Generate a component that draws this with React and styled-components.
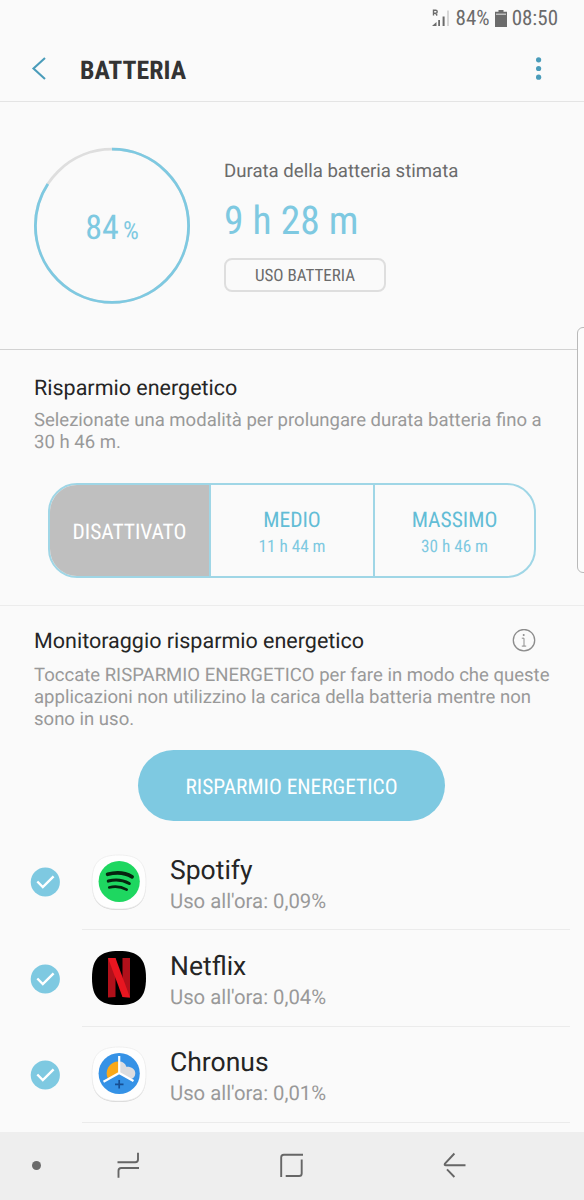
import styled, { createGlobalStyle, css } from 'styled-components';

const colors = {
    page: '#fafafa',
    blue: '#7ec9e1',
    blueText: '#62bdd6',
    accent: '#4a9cba',
    title: '#333333',
    black: '#252525',
    dark: '#6b6b6b',
    grey: '#999999',
    line: '#e4e4e4',
};

const apps = [
    { name: 'Spotify', usage: "Uso all'ora: 0,09%", icon: 'spotify' },
    { name: 'Netflix', usage: "Uso all'ora: 0,04%", icon: 'netflix' },
    { name: 'Chronus', usage: "Uso all'ora: 0,01%", icon: 'chronus' },
];

const Signal = () => (
    <svg width="19" height="18" viewBox="0 0 19 18">
        <path d="M1.500 6.500V1.200h2.200a1.500 1.500 0 0 1 0 3H1.500M3.500 4.200L5.200 6.500" fill="none" stroke="#6b6b6b" strokeWidth="1.400" />
        <path d="M0 17l4.500-4v4zM6.200 11H8v6H6.200zM10.600 7.500h2V17h-2z" fill="#6b6b6b" />
        <path d="M15.200 1.500h1.600V17h-1.600z" fill="#cfcfcf" />
    </svg>
);

const BatteryIcon = () => (
    <svg width="12" height="17" viewBox="0 0 12 17">
        <path d="M3.500 0h5v1.800H12V17H0V1.800h3.500z" fill="#6b6b6b" />
        <path d="M1 3.600h10v1.200H1z" fill="#d5d5d5" />
    </svg>
);

const BackIcon = () => (
    <svg width="16" height="24" viewBox="0 0 16 24">
        <path d="M14 1L2.500 11.500L14 22" fill="none" stroke={colors.accent} strokeWidth="2.100" />
    </svg>
);

const MoreIcon = () => (
    <svg width="8" height="24" viewBox="0 0 8 24">
        <circle cx="3.600" cy="2.800" r="2.600" fill={colors.accent} />
        <circle cx="3.600" cy="11.500" r="2.600" fill={colors.accent} />
        <circle cx="3.600" cy="20.200" r="2.600" fill={colors.accent} />
    </svg>
);

const InfoIcon = () => (
    <svg width="24" height="24" viewBox="0 0 24 24">
        <circle cx="12" cy="11.200" r="10.700" fill="none" stroke="#8c8c8c" strokeWidth="1.300" />
        <path d="M9.800 9.200h2.200v8M9.800 17.100h4.400" fill="none" stroke="#8c8c8c" strokeWidth="1" />
        <circle cx="11.700" cy="6" r="1" fill="#8c8c8c" />
    </svg>
);

const Ring = () => (
    <svg width="158" height="158" viewBox="0 0 158 158">
        <g fill="none" strokeWidth="2.800" transform="rotate(-90 79 79)">
            <circle cx="79.200" cy="79" r="76.600" stroke="#dedede" />
            <circle cx="79.200" cy="79" r="76.600" stroke={colors.blue} pathLength="100" strokeDasharray="84.200 15.800" />
        </g>
    </svg>
);

const CheckIcon = () => (
    <svg width="30" height="30" viewBox="0 0 30 30">
        <circle cx="15.300" cy="15" r="14.600" fill={colors.blue} />
        <path d="M7.300 14.500l5.500 5.500L23.600 9.300" fill="none" stroke="#fff" strokeWidth="2.400" />
    </svg>
);

const tile = 'M28 1C47.500 1 55 8.500 55 28S47.500 55 28 55 1 47.500 1 28 8.500 1 28 1z';

const AppIcon = ({ type }) => (
    <svg width="56" height="57" viewBox="0 0 56 57">
        {type !== 'netflix' && (
            <>
                <path d={tile} fill="#d4d4d4" transform="translate(0 .9)" />
                <path d={tile} fill="#fefefe" stroke="#ececec" strokeWidth=".8" />
            </>
        )}
        {type === 'spotify' && (
            <>
                <circle cx="28.200" cy="27.500" r="20.600" fill="#1ed760" />
                <g fill="none" stroke="#06240f" strokeLinecap="round">
                    <path d="M16.600 20.300c8-2.200 17.500-1.700 24.500 2.500" strokeWidth="3.700" />
                    <path d="M17.300 27.100c7.200-2 14.500-1.200 21 2.400" strokeWidth="3.100" />
                    <path d="M18.200 33.400c6.300-1.500 12-.8 17.500 2.300" strokeWidth="2.600" />
                </g>
            </>
        )}
        {type === 'netflix' && (
            <>
                <path d={tile} fill="#000" />
                <path d="M17 8h7.500v39l-7.500.500zM31.500 8H39v39.500l-7.500-.5z" fill="#b1101a" />
                <path d="M17 8h7.500L39 47.500l-7.500-.5z" fill="#e81620" />
            </>
        )}
        {type === 'chronus' && (
            <>
                <circle cx="28.200" cy="27.500" r="20.600" fill="#3592e6" />
                <path d="M28 27L17.300 33.500A12 12 0 0 1 28 15.500z" fill="#fba919" />
                <path d="M28 15.500c4 0 6.500 2 7.300 5.200 4.700-.4 9 2.300 9 6.500 0 3.400-2 5.300-4.500 5.800L28 27.500z" fill="#dcdde0" />
                <path d="M28.200 10V28M28.200 27L12.500 35.800M28.200 27l14.300 8" fill="none" stroke="#fff" strokeWidth="2.200" />
                <path d="M28.200 34v8.500M24 38.300h8.500" stroke="#174f93" strokeWidth="1.700" />
            </>
        )}
    </svg>
);

const RecentsIcon = () => (
    <svg width="24" height="26" viewBox="0 0 24 26">
        <path d="M1.500 10.300h17.800q2.700 0 2.700-2.700V.7M23 16H5.200q-2.700 0-2.700 2.700v7" fill="none" stroke="#666" strokeWidth="1.900" />
    </svg>
);

const HomeIcon = () => (
    <svg width="24" height="26" viewBox="0 0 24 26">
        <path d="M2.200 25V5.300q0-2.600 2.600-2.600H24M22.700 7.500v13.900q0 2.600-2.600 2.600H6.700" fill="none" stroke="#666" strokeWidth="1.900" />
    </svg>
);

const ReturnIcon = () => (
    <svg width="24" height="26" viewBox="0 0 24 26">
        <path d="M12.400 1.500L3 11.600q-1 1.700.8 1.700h19.700M5 17.300l7.400 7.700" fill="none" stroke="#666" strokeWidth="1.900" />
    </svg>
);

export default function App() {
    return (
        <Screen>
            <GlobalStyle />
            <StatusBar>
                <Signal />
                <Narrow $size={21}>84%</Narrow>
                <BatteryIcon />
                <Narrow $size={21}>08:50</Narrow>
            </StatusBar>
            <Header>
                <BackIcon />
                <Title>BATTERIA</Title>
                <MoreIcon />
            </Header>
            <Summary>
                <Gauge>
                    <Ring />
                    <GaugeLabel>84<small>%</small></GaugeLabel>
                </Gauge>
                <Estimate>
                    <EstimateLabel>Durata della batteria stimata</EstimateLabel>
                    <EstimateValue>9 h 28 m</EstimateValue>
                    <UsageButton>USO BATTERIA</UsageButton>
                </Estimate>
            </Summary>
            <Saving>
                <SectionTitle>Risparmio energetico</SectionTitle>
                <SectionText>Selezionate una modalità per prolungare durata batteria fino a<br />30 h 46 m.</SectionText>
                <Modes>
                    <Mode $active>DISATTIVATO</Mode>
                    <Mode>MEDIO<ModeTime>11 h 44 m</ModeTime></Mode>
                    <Mode>MASSIMO<ModeTime>30 h 46 m</ModeTime></Mode>
                </Modes>
            </Saving>
            <Monitor>
                <MonitorHead>
                    <SectionTitle>Monitoraggio risparmio energetico</SectionTitle>
                    <InfoIcon />
                </MonitorHead>
                <SectionText>
                    Toccate RISPARMIO ENERGETICO per fare in modo che queste<br />
                    applicazioni non utilizzino la carica della batteria mentre non<br />
                    sono in uso.
                </SectionText>
                <SaveButton>RISPARMIO ENERGETICO</SaveButton>
            </Monitor>
            <AppList>
                {apps.map((app) => (
                    <AppRow key={app.name}>
                        <CheckIcon />
                        <AppBody>
                            <AppIcon type={app.icon} />
                            <AppInfo>
                                <AppName>{app.name}</AppName>
                                <AppUsage>{app.usage}</AppUsage>
                            </AppInfo>
                        </AppBody>
                    </AppRow>
                ))}
            </AppList>
            <NavBar>
                <Dot />
                <RecentsIcon />
                <HomeIcon />
                <ReturnIcon />
            </NavBar>
            <EdgeHandle />
        </Screen>
    );
}

const GlobalStyle = createGlobalStyle`
    * {
        box-sizing: border-box;
    }

    body {
        margin: 0;
        background: ${colors.page};
        font-family: Roboto, sans-serif;
        text-rendering: geometricPrecision;
    }

    svg {
        display: block;
        flex-shrink: 0;
    }
`

const narrow = css`
    font-family: 'Roboto Condensed', Roboto, sans-serif;
    font-stretch: 75%;
    text-rendering: geometricPrecision;
`

const Screen = styled.div`
    position: relative;
    display: flex;
    flex-direction: column;
    width: 584px;
    height: 1200px;
    overflow: hidden;
    white-space: nowrap;
    background: ${colors.page};
`

const StatusBar = styled.div`
    display: flex;
    align-items: center;
    justify-content: flex-end;
    gap: 5px;
    height: 36px;
    padding-right: 26px;
    color: ${colors.dark};
`

const Narrow = styled.span`
    ${narrow}
    padding-top: 2px;
    font-size: ${({ $size }) => $size}px;
`

const Header = styled.header`
    display: flex;
    align-items: center;
    height: 66px;
    padding: 0 41px 0 31px;
    border-bottom: 1px solid ${colors.line};
`

const Title = styled.h1`
    ${narrow}
    flex-grow: 1;
    margin: 4px 0 0 33px;
    font-size: 25.8px;
    font-weight: 700;
    color: ${colors.title};
`

const Summary = styled.section`
    display: flex;
    height: 248px;
    padding: 45px 33px 0;
    border-bottom: 1px solid #d2d2d2;
`

const Gauge = styled.div`
    display: grid;
    width: 158px;
    height: 158px;

    > * {
        grid-area: 1 / 1;
    }
`

const GaugeLabel = styled.div`
    ${narrow}
    place-self: center;
    padding-top: 4px;
    font-size: 34px;
    color: ${colors.blue};

    small {
        margin-left: 4px;
        font-size: 25px;
    }
`

const Estimate = styled.div`
    margin-left: 33px;
`

const EstimateLabel = styled.div`
    margin-top: 12px;
    font-size: 18.6px;
    line-height: 24px;
    color: ${colors.dark};
`

const EstimateValue = styled.div`
    ${narrow}
    margin-top: 14px;
    font-size: 39.5px;
    line-height: 48px;
    color: ${colors.blue};
`

const UsageButton = styled.button`
    ${narrow}
    display: block;
    width: 162px;
    height: 34px;
    margin-top: 13px;
    padding: 2px 0 0;
    border: 2px solid #dedede;
    border-radius: 8px;
    background: transparent;
    font-size: 17px;
    color: ${colors.dark};
`

const SectionTitle = styled.h2`
    margin: 0;
    font-size: 21.5px;
    font-weight: 400;
    line-height: 26px;
    color: ${colors.black};
`

const SectionText = styled.p`
    margin: 7px 0 0;
    font-size: 18.550px;
    line-height: 22px;
    color: ${colors.grey};
`

const Saving = styled.section`
    height: 256px;
    padding: 26px 34px 0;
    border-bottom: 1px solid #ececec;
`

const Modes = styled.div`
    display: grid;
    grid-template-columns: 159px 164px 161px;
    width: 488px;
    height: 95px;
    margin: 30px 0 0 14px;
    overflow: hidden;
    border: 2px solid #9fd6e6;
    border-radius: 29px;
`

const Mode = styled.div`
    ${narrow}
    display: flex;
    flex-direction: column;
    align-items: center;
    justify-content: center;
    padding-top: ${({ $active }) => $active ? 5 : 6}px;
    border-left: 2px solid #9fd6e6;
    font-size: 21.5px;
    line-height: 26px;
    color: ${({ $active }) => $active ? '#fff' : colors.blueText};
    background: ${({ $active }) => $active ? '#bfbfbf' : 'transparent'};

    &:first-child {
        border-left: 0;
    }
`

const ModeTime = styled.span`
    font-size: 17.2px;
    color: ${colors.blue};
`

const Monitor = styled.section`
    padding: 23px 34px 0;

    ${SectionText} {
        margin-top: 9px;
    }
`

const MonitorHead = styled.div`
    display: flex;
    align-items: center;
    justify-content: space-between;
    padding-right: 14px;

    svg {
        margin-bottom: 2px;
    }
`

const SaveButton = styled.button`
    ${narrow}
    display: block;
    width: 307px;
    height: 71px;
    margin: 20px 0 0 104px;
    padding: 4px 0 0;
    border: 0;
    border-radius: 36px;
    background: ${colors.blue};
    font-size: 21.4px;
    color: #fff;
`

const AppList = styled.div`
    flex-grow: 1;
    padding: 13px 14px 0 30px;
`

const AppRow = styled.div`
    display: flex;
    align-items: center;
    height: 96.400px;
`

const AppBody = styled.div`
    display: flex;
    align-items: center;
    flex-grow: 1;
    gap: 23px;
    height: 100%;
    margin-left: 22px;
    padding: 1px 0 0 9px;
    border-bottom: 1px solid #ebebeb;
`

const AppInfo = styled.div`
    padding-top: 5px;
`

const AppName = styled.div`
    font-size: 26.5px;
    line-height: 32px;
    color: ${colors.black};
`

const AppUsage = styled.div`
    font-size: 20.3px;
    line-height: 28px;
    color: ${colors.grey};
`

const NavBar = styled.nav`
    display: flex;
    align-items: center;
    height: 68px;
    padding: 0 0 2px 32px;
    background: #eeeeee;

    svg {
        margin-left: 139px;
    }
`

const Dot = styled.span`
    width: 9px;
    height: 9px;
    margin-right: -64px;
    border-radius: 50%;
    background: #6b6b6b;
`

/* edge panel handle, lies over the page */
const EdgeHandle = styled.div`
    position: absolute;
    top: 327px;
    right: -8px;
    width: 15px;
    height: 246px;
    border: 1px solid #b9b9b9;
    border-radius: 6px;
    background: #fcfcfc;
`
